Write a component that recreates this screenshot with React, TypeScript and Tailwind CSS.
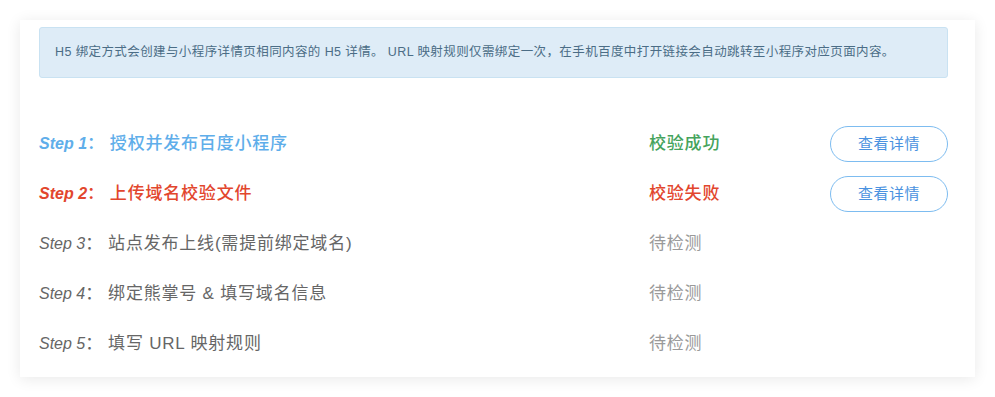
import React from 'react'

type Step = {
  no: number
  title: string
  status: string
  tone: 'ok' | 'fail' | 'wait'
}

const steps: Step[] = [
  { no: 1, title: '授权并发布百度小程序', status: '校验成功', tone: 'ok' },
  { no: 2, title: '上传域名校验文件', status: '校验失败', tone: 'fail' },
  { no: 3, title: '站点发布上线(需提前绑定域名)', status: '待检测', tone: 'wait' },
  { no: 4, title: '绑定熊掌号 & 填写域名信息', status: '待检测', tone: 'wait' },
  { no: 5, title: '填写 URL 映射规则', status: '待检测', tone: 'wait' },
]

const font = { fontFamily: '"Liberation Sans", "Noto Sans CJK SC", sans-serif' }

export default function App() {
  return (
    <div className="w-[995px] h-[397px] bg-white pt-5 pl-5" style={font}>
      <div className="w-[955px] h-[357px] bg-white shadow-[0_2px_14px_rgba(0,0,0,0.09)] pt-[7px] pl-[19px] pr-[27px]">
        <div className="h-[51px] rounded-[3px] border border-[#c9e2f2] bg-[#deecf7] flex items-center pl-[15px] text-[12.5px] tracking-[0.4px] text-[#4b6d86]">
          H5 绑定方式会创建与小程序详情页相同内容的 H5 详情。 URL 映射规则仅需绑定一次，在手机百度中打开链接会自动跳转至小程序对应页面内容。
        </div>
        <div className="mt-[41px]">
          {steps.map((s) => {
            const active = s.tone !== 'wait'
            const titleColor =
              s.tone === 'ok' ? 'text-[#5faeea]' : s.tone === 'fail' ? 'text-[#e2462d]' : 'text-[#666666]'
            const statusColor =
              s.tone === 'ok' ? 'text-[#45a35c]' : s.tone === 'fail' ? 'text-[#e2462d]' : 'text-[#9a9a9a]'
            return (
              <div key={s.no} className="h-[50px] flex items-center text-[16px]">
                <div className={`w-[610px] flex items-center ${titleColor} ${active ? 'font-medium' : ''}`}>
                  <span className={`italic ${active ? 'font-bold' : ''}`}>Step {s.no}</span>
                  <span className="text-[17px] tracking-[0.8px] mr-[5px]">：</span>
                  <span className="text-[17px] tracking-[0.8px]">{s.title}</span>
                </div>
                <div className={`w-[181px] text-[17px] tracking-[0.8px] ${statusColor} ${active ? 'font-medium' : ''}`}>
                  {s.status}
                </div>
                {active && (
                  <button className="w-[118px] h-[36px] rounded-full border border-[#7dbcf0] text-[#4a92e0] text-[15px] tracking-[0.5px] bg-white">
                    查看详情
                  </button>
                )}
              </div>
            )
          })}
        </div>
      </div>
    </div>
  )
}
